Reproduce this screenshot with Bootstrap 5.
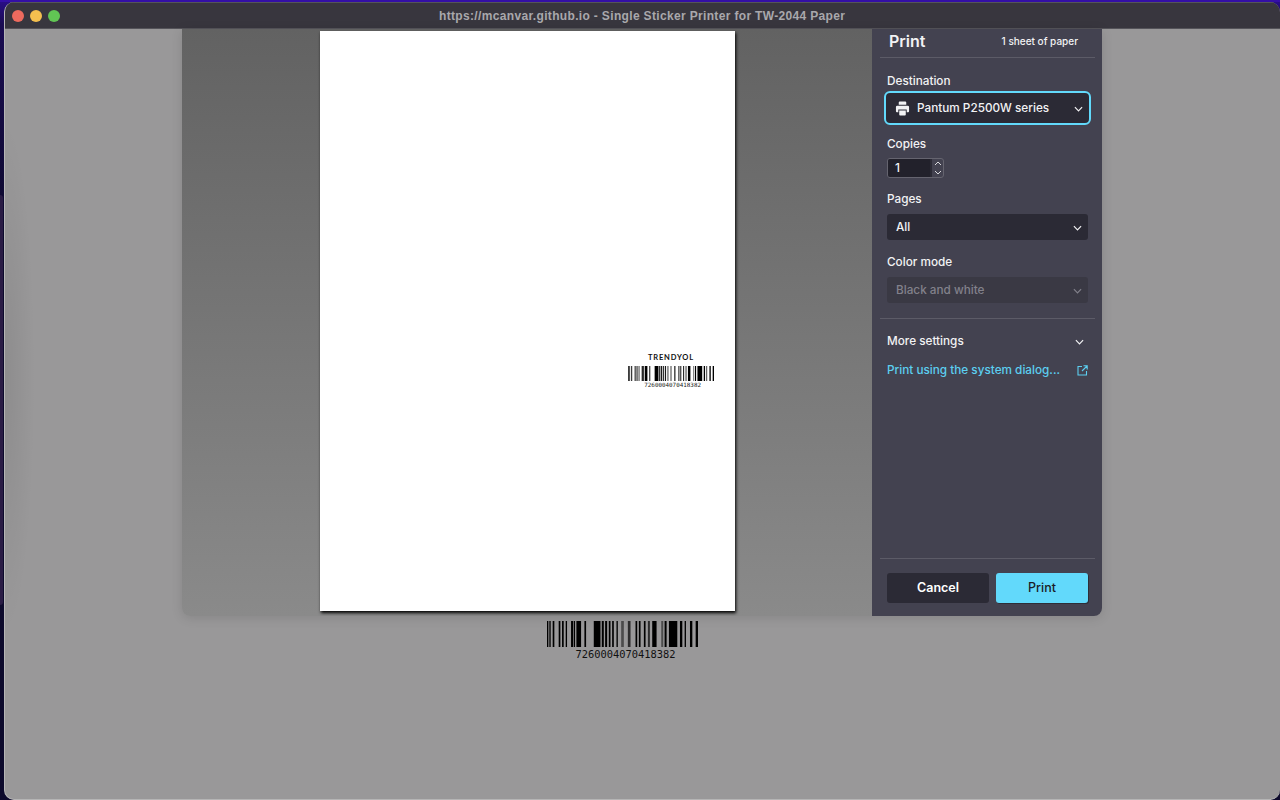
<!DOCTYPE html>
<html lang="en">

<head>
    <meta charset="UTF-8">
    <meta name="viewport" content="width=device-width, initial-scale=1.0">
    <title>Single Sticker Printer for TW-2044 Paper</title>
    <link href="https://cdn.jsdelivr.net/npm/bootstrap@5.3.0/dist/css/bootstrap.min.css" rel="stylesheet">
    <style>
        html, body { height: 100%; }
        body { background: linear-gradient(#2a0e8a, #1a0c52 3%, #0d0a2c 30%); overflow: hidden; font-family: Inter, "Liberation Sans", sans-serif; }
        .desk-strip { height: 2px; background: #340fa6; }
        .desk-dock { position: absolute; left: 0; top: 195px; width: 3px; height: 410px; background: #2a1c45; border-radius: 0 4px 4px 0; }
        .app-window { position: relative; margin-left: 4px; height: 798px; background: radial-gradient(ellipse 30px 260px at 0 375px, rgba(0,0,0,.08), transparent), #999899; border-radius: 10px; overflow: hidden; border-left: 1px solid #b5b5b5; border-bottom: 1px solid #b5b5b5; }
        .title-bar { height: 27px; background: #38363e; border-top: 1px solid #55545a; border-bottom: 1px solid #55545a; padding-left: 7px; color: #a9a8ac; font: bold 12px "Liberation Sans", sans-serif; letter-spacing: .34px; }
        .traffic { width: 12px; height: 12px; border-radius: 50%; margin-right: 6px; }
        .title-text { margin-left: 373px; }
        .print-dialog { width: 920px; height: 587px; margin-left: 177px; border-radius: 0 0 8px 8px; overflow: hidden; box-shadow: 0 2px 12px rgba(0,0,0,.12); }
        .preview-pane { width: 690px; background: linear-gradient(#626262, #8a8a8a); padding: 2px 0 0 138px; }
        .paper-sheet { width: 415px; height: 580px; background: #fff; box-shadow: 1px 2px 3px #000; padding: 322px 21px 0 0; }
        .sticker-name { font: 700 7.5px Lato, sans-serif; letter-spacing: .85px; color: #111; line-height: 9px; margin-right: 20px; }
        .sticker-code { font: 5.9px/7px "DejaVu Sans Mono", monospace; color: #222; margin: 1px 13px 0 0; }
        .sticker-bars { margin-top: 4px; }
        .settings-pane { width: 230px; background: #434250; color: #f2f2f4; padding: 0 14px 13px 15px; font-size: 11.75px; }
        .pane-head { height: 29px; margin: 0 -7px; padding: 0 17px 4px 9px; border-bottom: 1px solid #5c5b67; }
        .pane-title { font-size: 16px; font-weight: 600; }
        .pane-sheets { font-size: 10px; font-weight: 500; }
        .field-label { font-weight: 500; line-height: 15px; margin-top: 14px; }
        .field-label.first-label { margin-top: 16px; }
        .field-label.after-dest { margin-top: 12px; }
        .fake-select { height: 26px; margin-top: 7px; background: #2b2a35; border-radius: 3px; padding: 1px 6px 0 9px; font-weight: 500; }
        .fake-select.is-focus { height: 34px; margin: 2px -3px 0; padding: 1px 6px 0 9px; border: 2px solid #62d9fb; border-radius: 6px; }
        .fake-select.is-off { background: #3a3944; color: #82818b; }
        .copies-box { width: 57px; height: 20px; margin-top: 6px; border: 1px solid #65646f; border-radius: 3px; overflow: hidden; }
        .copies-val { width: 42px; background: #22212b; padding-left: 7px; line-height: 18px; font-weight: 500; font-size: 12px; }
        .copies-spin { width: 13px; border-left: 2px solid #2b2a35; }
        .pane-rule { border-top: 1px solid #5c5b67; margin: 15px -7px 0; }
        .more-label { margin-top: 15px; }
        .system-link { color: #5ccff1; font-weight: 500; line-height: 15px; margin-top: 14px; }
        .pane-foot .pane-rule { margin: 0 -7px 14px; }
        .btn-cancel, .btn-print { height: 30px; border-radius: 3px; font-size: 12.5px; padding: 0; border: 0; }
        .btn-cancel, .btn-cancel:hover { width: 102px; background: #2b2a35; color: #fff; font-weight: 600; }
        .btn-print, .btn-print:hover { width: 92px; background: #62d9fb; color: #1c1c26; font-weight: 500; box-shadow: 1px 1px 0 rgba(0,0,0,.3); }
        .bar-code { margin-left: 542px; width: 151px; margin-top: 5px; }
        .bar-digits { font: 10.4px/11px "DejaVu Sans Mono", monospace; color: #111; text-align: center; margin-top: 2px; padding-left: 6px; }
    </style>
</head>

<body>
<div class="desk-strip"></div>
<div class="desk-dock"></div>
<div class="app-window">
    <div class="title-bar d-flex align-items-center">
        <span class="traffic" style="background:#ed6a5e"></span>
        <span class="traffic" style="background:#f4bf4f"></span>
        <span class="traffic" style="background:#61c554"></span>
        <span class="title-text">https://mcanvar.github.io - Single Sticker Printer for TW-2044 Paper</span>
    </div>

    <div class="print-dialog d-flex">
        <div class="preview-pane">
            <div class="paper-sheet d-flex flex-column align-items-end">
                <div class="sticker-name">TRENDYOL</div>
                <svg class="js-barcode sticker-bars" width="86" height="15"></svg>
                <div class="sticker-code">7260004070418382</div>
            </div>
        </div>
        <div class="settings-pane d-flex flex-column">
            <div class="pane-head d-flex align-items-center justify-content-between">
                <span class="pane-title">Print</span>
                <span class="pane-sheets">1 sheet of paper</span>
            </div>

            <div class="field-label first-label">Destination</div>
            <div class="fake-select is-focus d-flex align-items-center justify-content-between">
                <span class="d-flex align-items-center" style="gap:7px">
                    <svg width="15" height="15" viewBox="0 0 16 16" fill="#f2f2f4"><path d="M4 1.500a1 1 0 0 1 1-1h6a1 1 0 0 1 1 1V4H4z"/><path d="M2.500 5h11A1.500 1.500 0 0 1 15 6.500V11a1 1 0 0 1-1 1h-1.500V9h-9v3H2a1 1 0 0 1-1-1V6.500A1.500 1.500 0 0 1 2.500 5z"/><path d="M4.500 10h7v4.500a1 1 0 0 1-1 1h-5a1 1 0 0 1-1-1z"/></svg>
                    Pantum P2500W series
                </span>
                <svg width="9" height="6" viewBox="0 0 10 6" fill="none" stroke="#f2f2f4" stroke-width="1.300"><path d="M1 1l4 4 4-4"/></svg>
            </div>

            <div class="field-label after-dest">Copies</div>
            <div class="copies-box d-flex">
                <div class="copies-val">1</div>
                <div class="copies-spin d-flex flex-column align-items-center justify-content-center gap-1">
                    <svg width="8" height="5" viewBox="0 0 8 5" fill="none" stroke="#d8d8dc"><path d="M1 4l3-3 3 3"/></svg>
                    <svg width="8" height="5" viewBox="0 0 8 5" fill="none" stroke="#d8d8dc"><path d="M1 1l3 3 3-3"/></svg>
                </div>
            </div>

            <div class="field-label">Pages</div>
            <div class="fake-select d-flex align-items-center justify-content-between">
                <span>All</span>
                <svg width="9" height="6" viewBox="0 0 10 6" fill="none" stroke="#f2f2f4" stroke-width="1.300"><path d="M1 1l4 4 4-4"/></svg>
            </div>

            <div class="field-label more-label">Color mode</div>
            <div class="fake-select is-off d-flex align-items-center justify-content-between">
                <span>Black and white</span>
                <svg width="9" height="6" viewBox="0 0 10 6" fill="none" stroke="#82818b" stroke-width="1.300"><path d="M1 1l4 4 4-4"/></svg>
            </div>

            <div class="pane-rule"></div>
            <div class="field-label more-label d-flex align-items-center justify-content-between">
                More settings
                <svg class="me-1" width="9" height="6" viewBox="0 0 10 6" fill="none" stroke="#f2f2f4" stroke-width="1.300"><path d="M1 1l4 4 4-4"/></svg>
            </div>
            <div class="system-link d-flex align-items-center justify-content-between">
                Print using the system dialog...
                <svg width="11" height="11" viewBox="0 0 11 11" fill="none" stroke="#5ccff1" stroke-width="1.100"><path d="M5 1.500H1v8.500h8.500V6M6.500 .8h3.700v3.700M10 1L5 6"/></svg>
            </div>

            <div class="pane-foot mt-auto">
                <div class="pane-rule"></div>
                <div class="d-flex justify-content-between">
                    <button type="button" class="btn btn-cancel">Cancel</button>
                    <button type="button" class="btn btn-print">Print</button>
                </div>
            </div>
        </div>
    </div>

    <div class="bar-code">
        <svg class="js-barcode d-block" width="151" height="26"></svg>
        <div class="bar-digits">7260004070418382</div>
    </div>
</div>

<script src="https://cdn.jsdelivr.net/npm/bootstrap@5.3.0/dist/js/bootstrap.bundle.min.js"></script>

<script>
    // bars read off the reference: [start, end, opacity]
    const bars = [
        [20, 24, 1], [27, 31, 1], [37, 42, 1], [55, 60, 1], [65, 70, 1], [76, 80, 1], [92, 98, 1], [100, 104, 1],
        [108, 122, 1], [132, 137, 1], [160, 180, 1], [184, 190, 1], [194, 200, 1], [205, 210, 1], [215, 220, 1],
        [228, 232, 1], [242, 250, .5], [262, 270, .7], [285, 290, 1], [295, 300, 1], [310, 315, 1], [322, 328, .7],
        [335, 348, 1], [362, 368, .5], [372, 378, 1], [385, 410, 1], [418, 425, 1], [432, 436, 1], [448, 455, 1], [465, 472, 1]
    ];

    document.querySelectorAll('.js-barcode').forEach(function (svg) {
        let h = svg.getAttribute('height');
        svg.setAttribute('viewBox', `20 0 452 ${h}`);
        svg.setAttribute('preserveAspectRatio', 'none');
        svg.innerHTML = bars.map(function (b) {
            return `<rect x="${b[0]}" y="0" width="${b[1] - b[0]}" height="${h}" fill="#000" fill-opacity="${b[2]}"/>`;
        }).join('');
    });
</script>
</body>

</html>
